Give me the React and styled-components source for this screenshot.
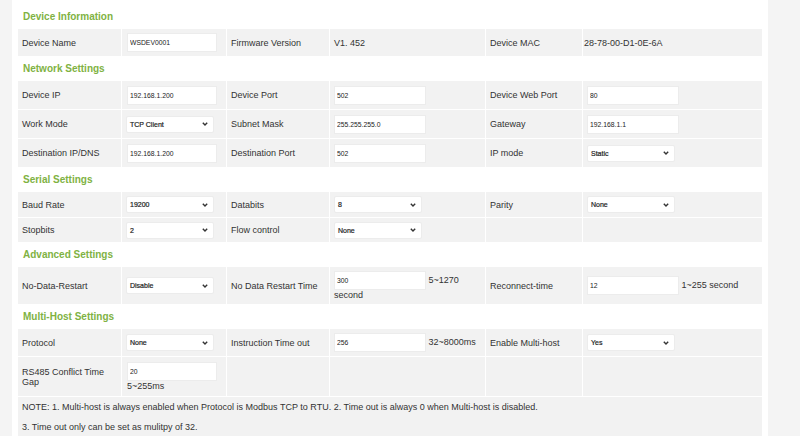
import React from 'react'
import styled, { createGlobalStyle } from 'styled-components'

const GlobalStyle = createGlobalStyle`
  html, body {
    margin: 0;
    padding: 0;
    background: #ffffff;
    font-family: "Liberation Sans", Arial, sans-serif;
    overflow: hidden;
  }
`

const COLS = '103px 104px 102px 155px 96px 179px'

const Chevron = () => (
  <svg width="6" height="4" viewBox="0 0 6 4">
    <polyline points="0.8,0.8 3,3 5.2,0.8" fill="none" stroke="#333" strokeWidth="1.4" />
  </svg>
)

const Field = ({ value, width = 90 }) => (
  <TextInput defaultValue={value} $w={width} />
)

const Dropdown = ({ value, width = 88 }) => (
  <SelectWrap $w={width}>
    <SelectText>{value}</SelectText>
    <Chevron />
  </SelectWrap>
)

const App = () => {
  return (
    <>
      <GlobalStyle />
      <Page>
        <SideStrip />
        <Main>
          <Form>
            <Header>Device Information</Header>
            <Row $h={27}>
              <Cell><Label>Device Name</Label></Cell>
              <Cell $pl={5}><Field value="WSDEV0001" /></Cell>
              <Cell><Label>Firmware Version</Label></Cell>
              <Cell><Value>V1. 452</Value></Cell>
              <Cell><Label>Device MAC</Label></Cell>
              <Cell $pl={1}><Value>28-78-00-D1-0E-6A</Value></Cell>
            </Row>

            <Header>Network Settings</Header>
            <Row $h={28}>
              <Cell><Label>Device IP</Label></Cell>
              <Cell $pl={5}><Field value="192.168.1.200" /></Cell>
              <Cell><Label>Device Port</Label></Cell>
              <Cell><Field value="502" width={92} /></Cell>
              <Cell><Label>Device Web Port</Label></Cell>
              <Cell><Field value="80" width={92} /></Cell>
            </Row>
            <Row $h={28}>
              <Cell><Label>Work Mode</Label></Cell>
              <Cell $pl={4}><Dropdown value="TCP Client" /></Cell>
              <Cell><Label>Subnet Mask</Label></Cell>
              <Cell><Field value="255.255.255.0" width={92} /></Cell>
              <Cell><Label>Gateway</Label></Cell>
              <Cell><Field value="192.168.1.1" width={92} /></Cell>
            </Row>
            <Row $h={28}>
              <Cell><Label>Destination IP/DNS</Label></Cell>
              <Cell $pl={5}><Field value="192.168.1.200" /></Cell>
              <Cell><Label>Destination Port</Label></Cell>
              <Cell><Field value="502" width={92} /></Cell>
              <Cell><Label>IP mode</Label></Cell>
              <Cell><Dropdown value="Static" /></Cell>
            </Row>

            <Header>Serial Settings</Header>
            <Row $h={25}>
              <Cell><Label>Baud Rate</Label></Cell>
              <Cell $pl={4}><Dropdown value="19200" /></Cell>
              <Cell><Label>Databits</Label></Cell>
              <Cell><Dropdown value="8" /></Cell>
              <Cell><Label>Parity</Label></Cell>
              <Cell><Dropdown value="None" /></Cell>
            </Row>
            <Row $h={24}>
              <Cell><Label>Stopbits</Label></Cell>
              <Cell $pl={4}><Dropdown value="2" /></Cell>
              <Cell><Label>Flow control</Label></Cell>
              <Cell><Dropdown value="None" /></Cell>
              <Cell />
              <Cell />
            </Row>

            <Header>Advanced Settings</Header>
            <Row $h={37}>
              <Cell><Label>No-Data-Restart</Label></Cell>
              <Cell $pl={4}><Dropdown value="Disable" /></Cell>
              <Cell><Label>No Data Restart Time</Label></Cell>
              <Cell><Flow><Field value="300" width={92} /> 5~1270 second</Flow></Cell>
              <Cell><Label>Reconnect-time</Label></Cell>
              <Cell><Flow><Field value="12" width={92} /> 1~255 second</Flow></Cell>
            </Row>

            <Header>Multi-Host Settings</Header>
            <Row $h={27}>
              <Cell><Label>Protocol</Label></Cell>
              <Cell $pl={4}><Dropdown value="None" /></Cell>
              <Cell><Label>Instruction Time out</Label></Cell>
              <Cell><Flow><Field value="256" width={92} /> 32~8000ms</Flow></Cell>
              <Cell><Label>Enable Multi-host</Label></Cell>
              <Cell><Dropdown value="Yes" /></Cell>
            </Row>
            <Row $h={39}>
              <Cell><Label>RS485 Conflict Time Gap</Label></Cell>
              <Cell $pl={5}><Flow><Field value="20" /> 5~255ms</Flow></Cell>
              <Cell />
              <Cell />
              <Cell />
              <Cell />
            </Row>
            <Note>
              <p>NOTE: 1. Multi-host is always enabled when Protocol is Modbus TCP to RTU. 2. Time out is always 0 when Multi-host is disabled.</p>
              <p>3. Time out only can be set as mulitpy of 32.</p>
            </Note>
          </Form>
        </Main>
        <SideStrip $w={32} />
      </Page>
    </>
  )
}

const Page = styled.div`
  display: flex;
  width: 800px;
  height: 436px;
  overflow: hidden;
`

const SideStrip = styled.div`
  flex: 0 0 ${(p) => p.$w || 12}px;
  background: #f4f4f4;
`

const Main = styled.div`
  flex: 1;
  background: #ffffff;
  padding: 5px 6px 0 6px;
`

const Form = styled.div`
  display: flex;
  flex-direction: column;
  gap: 1px;
  width: 744px;
`

const Header = styled.div`
  height: 23px;
  display: flex;
  align-items: center;
  padding-left: 5px;
  font-size: 10px;
  font-weight: 700;
  color: #80b243;
`

const Row = styled.div`
  display: grid;
  grid-template-columns: ${COLS};
  column-gap: 1px;
  height: ${(p) => p.$h}px;
`

const Cell = styled.div`
  background: #f2f2f2;
  display: flex;
  align-items: center;
  padding-left: ${(p) => (p.$pl != null ? p.$pl : 4)}px;
  min-width: 0;
`

const Label = styled.span`
  font-size: 9px;
  line-height: 10px;
  color: #333333;
`

const Value = styled.span`
  font-size: 9px;
  color: #333333;
`

const Flow = styled.div`
  font-size: 9px;
  line-height: 11px;
  color: #333333;
`

const TextInput = styled.input`
  box-sizing: border-box;
  width: ${(p) => p.$w}px;
  height: 19px;
  border: 1px solid #ececec;
  background: #ffffff;
  padding: 0 2px;
  font-family: "Liberation Sans", Arial, sans-serif;
  font-size: 6.8px;
  color: #222222;
  outline: none;
  vertical-align: middle;
  margin: 0;
`

const SelectWrap = styled.div`
  box-sizing: border-box;
  display: flex;
  align-items: center;
  justify-content: space-between;
  width: ${(p) => p.$w}px;
  height: 17px;
  padding: 0 5px 0 3px;
  border: 1px solid #ececec;
  border-radius: 2px;
  background: #ffffff;
`

const SelectText = styled.span`
  font-size: 7px;
  color: #222222;
  -webkit-text-stroke: 0.2px #222;
`

const Note = styled.div`
  background: #f2f2f2;
  height: 60px;
  padding-left: 4px;
  font-size: 9px;
  color: #333333;

  p {
    margin: 0;
    line-height: 20px;
  }
`

export default App
